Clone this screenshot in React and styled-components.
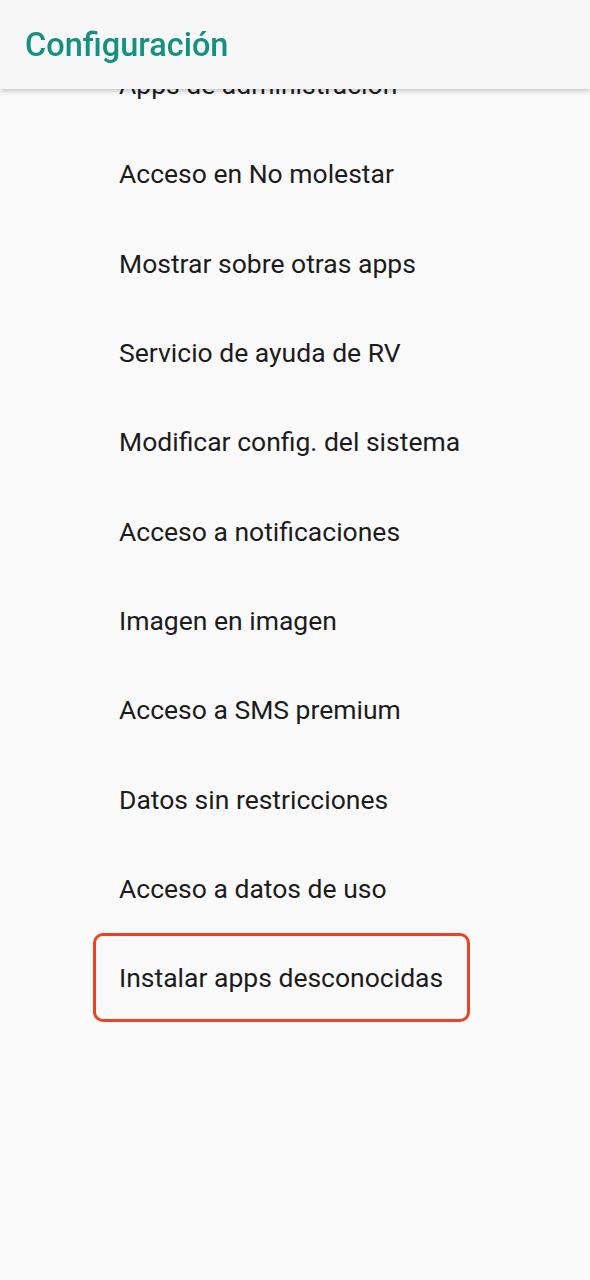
import React from "react"
import styled, { createGlobalStyle } from "styled-components"

const GlobalStyle = createGlobalStyle`
  html, body {
    margin: 0;
    padding: 0;
    background: #fafafa;
    font-family: Roboto, "Liberation Sans", sans-serif;
  }
`

const AppBar = styled.header`
  position: fixed;
  top: 0;
  left: 0;
  right: 0;
  height: 89px;
  background: #f7f7f7;
  box-shadow: 0 2px 5px rgba(0, 0, 0, 0.22);
  display: flex;
  align-items: center;
  padding: 0 25px;
  box-sizing: border-box;
  z-index: 2;
`

const Title = styled.h1`
  margin: 0;
  font-size: 32.5px;
  font-weight: 500;
  color: #17917f;
`

const List = styled.ul`
  list-style: none;
  margin: 0;
  padding: 40px 0 0 0;
  display: flex;
  flex-direction: column;
  align-items: flex-start;
  min-height: 1280px;
  box-sizing: border-box;
`

const Item = styled.li`
  height: 89.3px;
  display: flex;
  align-items: center;
  box-sizing: border-box;
  font-size: 26.5px;
  color: #1c1c1c;
  margin-left: ${p => (p.$highlight ? "93px" : "119px")};
  padding: ${p => (p.$highlight ? "0 24px 0 23px" : "0")};
  border: ${p => (p.$highlight ? "3px solid #ea4424" : "none")};
  border-radius: ${p => (p.$highlight ? "10px" : "0")};
`

const items = [
  "Apps de administración",
  "Acceso en No molestar",
  "Mostrar sobre otras apps",
  "Servicio de ayuda de RV",
  "Modificar config. del sistema",
  "Acceso a notificaciones",
  "Imagen en imagen",
  "Acceso a SMS premium",
  "Datos sin restricciones",
  "Acceso a datos de uso",
  "Instalar apps desconocidas",
]

export default function App() {
  return (
    <>
      <GlobalStyle />
      <AppBar>
        <Title>Configuración</Title>
      </AppBar>
      <List>
        {items.map((label, i) => (
          <Item key={label} $highlight={i === items.length - 1}>
            {label}
          </Item>
        ))}
      </List>
    </>
  )
}
